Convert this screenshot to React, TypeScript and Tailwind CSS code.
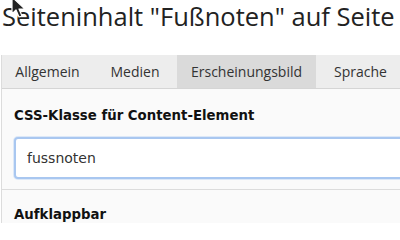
import React from "react"

const tabs = [
  { label: "Allgemein", w: "w-[91px]" },
  { label: "Medien", w: "w-[84px]" },
  { label: "Erscheinungsbild", w: "w-[139px]" },
  { label: "Sprache", w: "w-[89px]" },
]

function Cursor() {
  return (
    <svg
      className="absolute left-[11px] top-[-4px]"
      width="16"
      height="24"
      viewBox="0 0 16 24"
    >
      <path
        d="M1 1 L1 18 L5 14 L8 21 L11 20 L8 13 L14 13 Z"
        fill="#222"
        stroke="#fff"
        strokeWidth="1.2"
        strokeLinejoin="round"
      />
    </svg>
  )
}

export default function App() {
  return (
    <div className="relative w-[400px] h-[225px] overflow-hidden bg-white">
      <Cursor />
      <h1 className="pl-[2px] pt-[1px] h-[55px] text-[25.5px] leading-[30px] text-[#222] [font-family:'Open_Sans',sans-serif] whitespace-nowrap">
        Seiteninhalt "Fußnoten" auf Seite
      </h1>
      <div className="ml-[1px] border-l border-[#dcdcdc]">
        <div className="flex h-[34px] bg-[#ededed] border-b border-[#d5d5d5] [font-family:'Open_Sans',sans-serif] text-[14px] text-[#333]">
          {tabs.map((t) => (
            <div
              key={t.label}
              className={
                t.label === "Erscheinungsbild"
                  ? `flex shrink-0 items-center justify-center ${t.w} bg-[#dadada]`
                  : `flex shrink-0 items-center justify-center ${t.w}`
              }
            >
              {t.label}
            </div>
          ))}
        </div>
        <div className="bg-[#fafafa] pl-[12px] [font-family:'DejaVu_Sans',Verdana,sans-serif]">
          <div className="pt-[19px] text-[13.3px] font-bold text-[#111] leading-[16px] whitespace-nowrap">
            CSS-Klasse für Content-Element
          </div>
          <div className="mt-[13px] -mr-[10px] flex items-center h-[42px] rounded-[4px] border-2 border-[#a9c7f0] bg-white shadow-[0_0_0_1px_#dce8f8] pl-[11px] text-[14px] text-[#333]">
            fussnoten
          </div>
          <div className="mt-[10px] border-t border-[#dcdcdc] -ml-[12px]" />
          <div className="pt-[17px] text-[13.3px] font-bold text-[#111] leading-[16px]">
            Aufklappbar
          </div>
        </div>
      </div>
    </div>
  )
}
